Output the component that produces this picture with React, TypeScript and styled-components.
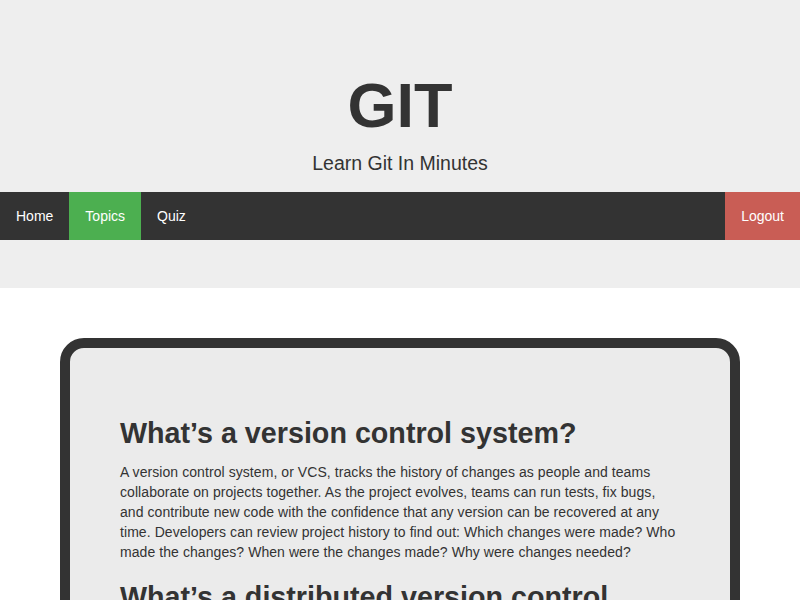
import styled, { createGlobalStyle } from 'styled-components'

/* ── Global ── */
const GlobalStyle = createGlobalStyle`
  html, body {
    margin: 0;
    padding: 0;
    background: #ffffff;
    font-family: "Liberation Sans", Arial, Helvetica, sans-serif;
    color: #333333;
  }
`

/* ── Header ── */
const Header = styled.header`
  background-color: #eeeeee;
  text-align: center;
  padding-top: 68px;
`

const Logo = styled.h1`
  margin: 0;
  font-size: 63px;
  line-height: 74px;
  font-weight: 700;
  color: #333333;
`

const Tagline = styled.p`
  margin: 10px 0 0;
  padding-bottom: 17px;
  font-size: 19.5px;
  line-height: 23px;
  font-weight: 300;
  color: #333333;
`

const Nav = styled.nav`
  display: flex;
  height: 48px;
  background-color: #333333;
  text-align: left;
`

const NavLink = styled.a<{ $active?: boolean; $danger?: boolean }>`
  display: flex;
  align-items: center;
  padding: 0 16px;
  font-size: 14px;
  color: #ffffff;
  text-decoration: none;
  background-color: ${({ $active, $danger }) =>
    $active ? '#4caf50' : $danger ? '#c95d55' : 'transparent'};
  margin-left: ${({ $danger }) => ($danger ? 'auto' : '0')};
`

const Band = styled.div`
  height: 48px;
`

/* ── Content ── */
const Main = styled.main`
  padding: 50px 60px 0;
`

const Card = styled.section`
  background-color: #ebebeb;
  border: 10px solid #333333;
  border-radius: 24px;
  padding: 50px;
`

const Heading = styled.h2`
  margin: 18px 0 12px;
  font-size: 28.7px;
  line-height: 34px;
  font-weight: 700;
  color: #333333;
`

const Text = styled.p`
  margin: 0;
  font-size: 14px;
  line-height: 20px;
  letter-spacing: 0.07px;
  color: #333333;
`

export default function App() {
  return (
    <>
      <GlobalStyle />
      <Header>
        <Logo>GIT</Logo>
        <Tagline>Learn Git In Minutes</Tagline>
        <Nav>
          <NavLink href="#">Home</NavLink>
          <NavLink href="#" $active>Topics</NavLink>
          <NavLink href="#">Quiz</NavLink>
          <NavLink href="#" $danger>Logout</NavLink>
        </Nav>
        <Band />
      </Header>

      <Main>
        <Card>
          <article>
            <Heading>What’s a version control system?</Heading>
            <Text>
              A version control system, or VCS, tracks the history of changes as people and teams
              collaborate on projects together. As the project evolves, teams can run tests, fix
              bugs, and contribute new code with the confidence that any version can be recovered
              at any time. Developers can review project history to find out: Which changes were
              made? Who made the changes? When were the changes made? Why were changes needed?
            </Text>
            <Heading>What’s a distributed version control system?</Heading>
            <Text>
              Git is an example of a distributed version control system (DVCS) commonly used for
              open source and commercial software development. DVCSs allow full access to every
              file, branch, and iteration of a project, and allow every user access to a full and
              self-contained history of all changes.
            </Text>
          </article>
        </Card>
      </Main>
    </>
  )
}
